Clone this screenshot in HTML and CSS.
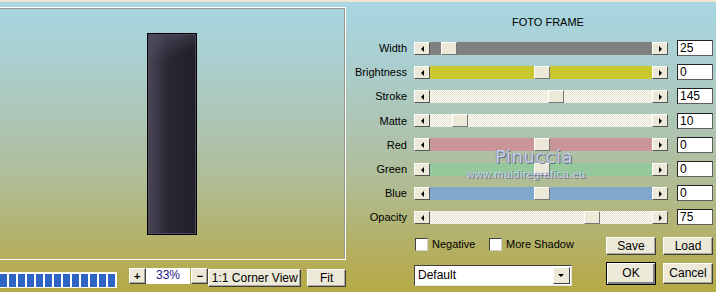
FILE: index.html
```html
<!DOCTYPE html>
<html>
<head>
  <title>Foto Frame</title>
  <meta name="viewport" content="width=device-width, initial-scale=1.0">
  <link rel="stylesheet" href="styles.css">
</head>
<body>
  <div class="window">

    <!-- Preview side -->
    <div class="preview-col">
      <div class="preview">
        <div class="frame-sample"></div>
      </div>
      <div class="toolbar">
        <div class="progress"></div>
        <button class="btn btn-zoom">+</button>
        <div class="zoom-value">33%</div>
        <button class="btn btn-zoom">&minus;</button>
        <button class="btn btn-corner">1:1 Corner View</button>
        <button class="btn btn-fit">Fit</button>
      </div>
    </div>

    <!-- Settings side -->
    <div class="panel">
      <div class="title">FOTO FRAME</div>

      <div class="sliders">
        <div class="row">
          <span class="label">Width</span>
          <div class="scroll">
            <span class="arrow arrow-left"></span>
            <div class="track track-gray"><span class="thumb" style="margin-left:11px"></span></div>
            <span class="arrow arrow-right"></span>
          </div>
          <div class="value">25</div>
        </div>
        <div class="row">
          <span class="label">Brightness</span>
          <div class="scroll">
            <span class="arrow arrow-left"></span>
            <div class="track track-yellow"><span class="thumb" style="margin-left:104px"></span></div>
            <span class="arrow arrow-right"></span>
          </div>
          <div class="value">0</div>
        </div>
        <div class="row">
          <span class="label">Stroke</span>
          <div class="scroll">
            <span class="arrow arrow-left"></span>
            <div class="track track-dither"><span class="thumb" style="margin-left:118px"></span></div>
            <span class="arrow arrow-right"></span>
          </div>
          <div class="value">145</div>
        </div>
        <div class="row">
          <span class="label">Matte</span>
          <div class="scroll">
            <span class="arrow arrow-left"></span>
            <div class="track track-dither"><span class="thumb" style="margin-left:22px"></span></div>
            <span class="arrow arrow-right"></span>
          </div>
          <div class="value">10</div>
        </div>
        <div class="row">
          <span class="label">Red</span>
          <div class="scroll">
            <span class="arrow arrow-left"></span>
            <div class="track track-red"><span class="thumb" style="margin-left:104px"></span></div>
            <span class="arrow arrow-right"></span>
          </div>
          <div class="value">0</div>
        </div>
        <div class="row">
          <span class="label">Green</span>
          <div class="scroll">
            <span class="arrow arrow-left"></span>
            <div class="track track-green"><span class="thumb" style="margin-left:104px"></span></div>
            <span class="arrow arrow-right"></span>
          </div>
          <div class="value">0</div>
        </div>
        <div class="row">
          <span class="label">Blue</span>
          <div class="scroll">
            <span class="arrow arrow-left"></span>
            <div class="track track-blue"><span class="thumb" style="margin-left:104px"></span></div>
            <span class="arrow arrow-right"></span>
          </div>
          <div class="value">0</div>
        </div>
        <div class="row">
          <span class="label">Opacity</span>
          <div class="scroll">
            <span class="arrow arrow-left"></span>
            <div class="track track-dither"><span class="thumb" style="margin-left:154px"></span></div>
            <span class="arrow arrow-right"></span>
          </div>
          <div class="value">75</div>
        </div>
      </div>

      <div class="options">
        <div class="checks">
          <label class="check check-first"><span class="box"></span>Negative</label>
          <label class="check"><span class="box"></span>More Shadow</label>
        </div>
        <button class="btn btn-dlg">Save</button>
        <button class="btn btn-dlg">Load</button>
      </div>

      <div class="actions">
        <div class="select">
          <span class="select-text">Default</span>
          <span class="select-arrow"></span>
        </div>
        <button class="btn btn-dlg btn-ok">OK</button>
        <button class="btn btn-dlg btn-cancel">Cancel</button>
      </div>
    </div>
  </div>

  <!-- watermark over the sliders -->
  <div class="watermark">
    <div class="wm-name">Pinuccia</div>
    <div class="wm-url">www.maidiregrafica.eu</div>
  </div>
</body>
</html>
```

FILE: styles.css
```css
body {
  margin: 0;
  width: 716px;
  height: 292px;
  overflow: hidden;
  font-family: "Liberation Sans", Arial, sans-serif;
  font-size: 11px;
  color: #000;
  border-top: 2px solid #efe4cf;
  box-sizing: border-box;
  background: linear-gradient(to bottom, #a8d7e3 0%, #aacfd0 20%, #aec4b0 45%, #b0bb90 65%, #b4b062 85%, #b6a944 100%);
  position: relative;
}
.window {
  display: flex;
  height: 100%;
}

/* preview */
.preview-col {
  width: 346px;
  flex: none;
}
.preview {
  margin-top: 5px;
  height: 253px;
  box-sizing: border-box;
  border: 1px solid #fff;
  border-left: none;
  box-shadow: inset -1px 1px 0 #9a9a8c;
  display: flex;
  align-items: center;
  justify-content: center;
  padding-right: 2px;
}
.frame-sample {
  width: 48px;
  height: 200px;
  border: 1px solid #000;
  background:
    linear-gradient(160deg, rgba(80,76,94,0.9) 0, rgba(40,37,50,0) 30px),
    linear-gradient(to right, #4a4656 0%, #2c2936 40%, #211f2a 100%);
  box-shadow: inset 0 0 0 1px #4e4a5a;
}
.toolbar {
  display: flex;
  align-items: flex-start;
  margin-top: 8px;
}
.progress {
  width: 116px;
  height: 13px;
  margin-top: 4px;
  border: 1px solid #fff;
  border-left: none;
  border-top-width: 2px;
  background: repeating-linear-gradient(90deg, #2e64c6 0 7px, #fff 7px 9px);
  margin-right: 12px;
}

/* buttons */
.btn {
  font-family: inherit;
  font-size: 11px;
  color: #000;
  background: #ece9d8;
  border: 1px solid;
  border-color: #fff #404040 #404040 #fff;
  box-shadow: inset -1px -1px 0 #aca899;
  padding: 0;
  margin: 0;
  box-sizing: border-box;
}
.btn-zoom {
  width: 17px;
  height: 16px;
  font-weight: bold;
  line-height: 12px;
}
.zoom-value {
  width: 45px;
  height: 16px;
  background: #fff;
  color: #1b1b8a;
  font-size: 12px;
  text-align: center;
  line-height: 14px;
  margin-right: 1px;
}
.btn-corner {
  width: 93px;
  height: 18px;
  margin-top: 1px;
  font-size: 12px;
}
.btn-fit {
  width: 39px;
  height: 18px;
  margin-top: 1px;
  margin-left: 6px;
  font-size: 12px;
}

/* settings panel */
.panel {
  flex: 1;
  padding-top: 13px;
}
.title {
  height: 14px;
  line-height: 14px;
  text-align: center;
  padding-left: 30px;
}
.sliders {
  margin-top: 7px;
}
.row {
  height: 24.2px;
  display: flex;
  align-items: center;
}
.label {
  width: 61px;
  text-align: right;
  margin-right: 7px;
  font-size: 11px;
}
.scroll {
  width: 254px;
  height: 13px;
  display: flex;
}
.arrow {
  width: 16px;
  height: 13px;
  box-sizing: border-box;
  background: #ece9d8;
  border: 1px solid;
  border-color: #fff #555 #555 #fff;
  position: relative;
}
.arrow::after {
  content: "";
  position: absolute;
  top: 3px;
  left: 6px;
  border: 3px solid transparent;
  border-width: 3px 3px;
}
.arrow-left::after {
  left: 3px;
  border-right-color: #000;
}
.arrow-right::after {
  left: 6px;
  border-left-color: #000;
}
.track {
  flex: 1;
  display: flex;
}
.thumb {
  width: 16px;
  height: 13px;
  box-sizing: border-box;
  background: #ece9d8;
  border: 1px solid;
  border-color: #fff #777 #777 #fff;
}
.track-gray { background: #808080; }
.track-yellow { background: #c9c82e; }
.track-red { background: #c99597; }
.track-green { background: #95c99b; }
.track-blue { background: #80a8cc; }
.track-dither {
  background: repeating-conic-gradient(#fbfaf5 0 25%, #e6e2d3 0 50%) 0 0 / 2px 2px;
}
.value {
  width: 36px;
  height: 16px;
  box-sizing: border-box;
  margin-left: 9px;
  background: #fff;
  border: 1px solid;
  border-color: #202020 #606060 #606060 #202020;
  padding-left: 2px;
  line-height: 14px;
  font-size: 12px;
}

/* options and actions */
.options, .actions {
  display: flex;
  align-items: flex-start;
  padding-left: 68px;
}
.options {
  margin-top: 7px;
  height: 18px;
}
.checks {
  width: 192px;
  display: flex;
  align-items: center;
  height: 15px;
}
.check {
  display: flex;
  align-items: center;
  font-size: 11px;
}
.check-first {
  width: 74px;
}
.box {
  width: 13px;
  height: 13px;
  box-sizing: border-box;
  margin-left: 1px;
  margin-right: 4px;
  background: #fff;
  border: 1px solid;
  border-color: #404040 #d0d0d0 #d0d0d0 #404040;
}
.btn-dlg {
  width: 50px;
  height: 18px;
  margin-right: 7px;
  font-size: 12px;
}
.actions {
  margin-top: 7px;
}
.select {
  width: 158px;
  height: 21px;
  margin-top: 3px;
  margin-right: 34px;
  box-sizing: border-box;
  background: #fff;
  border: 1px solid;
  border-color: #404040 #e0e0e0 #e0e0e0 #404040;
  display: flex;
  align-items: center;
  justify-content: space-between;
}
.select-text {
  padding-left: 3px;
  font-size: 12px;
}
.select-arrow {
  width: 17px;
  height: 17px;
  margin-right: 1px;
  box-sizing: border-box;
  background: #ece9d8;
  border: 1px solid;
  border-color: #fff #404040 #404040 #fff;
  position: relative;
}
.select-arrow::after {
  content: "";
  position: absolute;
  top: 6px;
  left: 4px;
  border: 3px solid transparent;
  border-top: 3px solid #000;
  border-width: 3px 3px 0;
}
.btn-ok {
  height: 23px;
  outline: 1px solid #000;
  outline-offset: -1px;
  border-color: #000;
  box-shadow: inset 1px 1px 0 #fff, inset -2px -2px 0 #808080;
}
.btn-cancel {
  height: 21px;
  margin-top: 1px;
}

/* watermark */
.watermark {
  position: absolute;
  left: 465px;
  top: 144px;
  width: 122px;
  text-align: center;
  pointer-events: none;
}
.wm-name {
  font-family: "DejaVu Sans", sans-serif;
  font-size: 18px;
  letter-spacing: 0.5px;
  padding-left: 16px;
  color: rgba(206, 210, 240, 0.95);
  text-shadow: 1px 1px 0 rgba(60, 68, 120, 0.7), -1px 0 0 rgba(90, 100, 150, 0.4);
  line-height: 22px;
}
.wm-url {
  font-size: 11px;
  letter-spacing: 0.4px;
  color: rgba(206, 210, 240, 0.95);
  text-shadow: 1px 1px 0 rgba(60, 68, 120, 0.6);
  line-height: 12px;
}
```
